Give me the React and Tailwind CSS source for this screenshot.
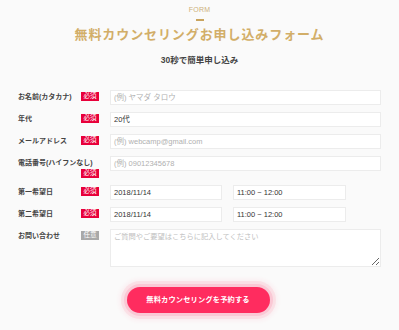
import React from "react";

const font = { fontFamily: '"Liberation Sans", "Noto Sans CJK JP", sans-serif' };

function Badge({ optional }) {
  return (
    <span
      className={
        "ml-auto flex h-[9px] w-[18px] shrink-0 items-center justify-center text-[6.5px] leading-none text-white " +
        (optional ? "bg-[#a9a9a9]" : "bg-[#e8003a]")
      }
    >
      {optional ? "任意" : "必須"}
    </span>
  );
}

function Label({ text, optional }) {
  return (
    <div className="flex w-[81px] shrink-0 flex-wrap items-start pt-[2px]">
      <span className="whitespace-nowrap text-[7px] font-semibold leading-[10px] text-[#444]">{text}</span>
      <Badge optional={optional} />
    </div>
  );
}

function Field({ value, placeholder, className = "" }) {
  return (
    <div
      className={
        "flex h-[15px] items-center border border-[#ececec] bg-white pl-[3px] text-[7.5px] " +
        (value ? "text-[#333] " : "text-[#b0b0b0] ") +
        className
      }
    >
      {value || placeholder}
    </div>
  );
}

export default function App() {
  return (
    <div className="h-[330px] w-[399px] overflow-hidden bg-[#fafafa]" style={font}>
      <div className="flex flex-col items-center pt-[6px]">
        <div className="text-[7px] leading-[8px] tracking-[0.03em] text-[#cdb07a]">FORM</div>
        <div className="mt-[5px] h-[2px] w-[8px] bg-[#c9a45e]" />
        <div className="mt-[5px] text-[13px] font-bold leading-[18px] tracking-[0.07em] text-[#d2ae68]">
          無料カウンセリングお申し込みフォーム
        </div>
        <div className="mt-[10px] text-[8.5px] font-bold leading-[12px] text-[#444]">30秒で簡単申し込み</div>
      </div>

      <div className="mt-[24px] flex flex-col gap-[7px] px-[18px]">
        <div className="flex gap-[11px]">
          <Label text="お名前(カタカナ)" />
          <Field className="flex-1" placeholder="(例) ヤマダ タロウ" />
        </div>
        <div className="flex gap-[11px]">
          <Label text="年代" />
          <Field className="flex-1" value="20代" />
        </div>
        <div className="flex gap-[11px]">
          <Label text="メールアドレス" />
          <Field className="flex-1" placeholder="(例) webcamp@gmail.com" />
        </div>
        <div className="flex h-[22px] gap-[11px]">
          <Label text="電話番号(ハイフンなし)" />
          <Field className="flex-1" placeholder="(例) 09012345678" />
        </div>
        <div className="flex gap-[11px]">
          <Label text="第一希望日" />
          <Field className="w-[112px]" value="2018/11/14" />
          <Field className="w-[113px]" value="11:00 ~ 12:00" />
        </div>
        <div className="flex gap-[11px]">
          <Label text="第二希望日" />
          <Field className="w-[112px]" value="2018/11/14" />
          <Field className="w-[113px]" value="11:00 ~ 12:00" />
        </div>
        <div className="flex gap-[11px]">
          <Label text="お問い合わせ" optional />
          <textarea
            className="h-[38px] flex-1 border border-[#ececec] bg-white px-[3px] pt-[2px] text-[7.25px] leading-[10px] text-[#333] outline-none placeholder:text-[#c0c0c0]"
            placeholder="ご質問やご要望はこちらに記入してください"
            style={font}
          />
        </div>
      </div>

      <div className="mt-[20px] flex justify-center">
        <button
          className="ml-[-3px] flex h-[26px] w-[143px] items-center justify-center rounded-full bg-[#ff2c5f] text-[7.25px] font-bold tracking-[0.02em] text-white shadow-[0_0_0_3px_rgba(255,45,95,0.12),0_0_0_6px_rgba(255,45,95,0.08),0_0_4px_8px_rgba(255,45,95,0.06)]"
          style={font}
        >
          無料カウンセリングを予約する
        </button>
      </div>
    </div>
  );
}
